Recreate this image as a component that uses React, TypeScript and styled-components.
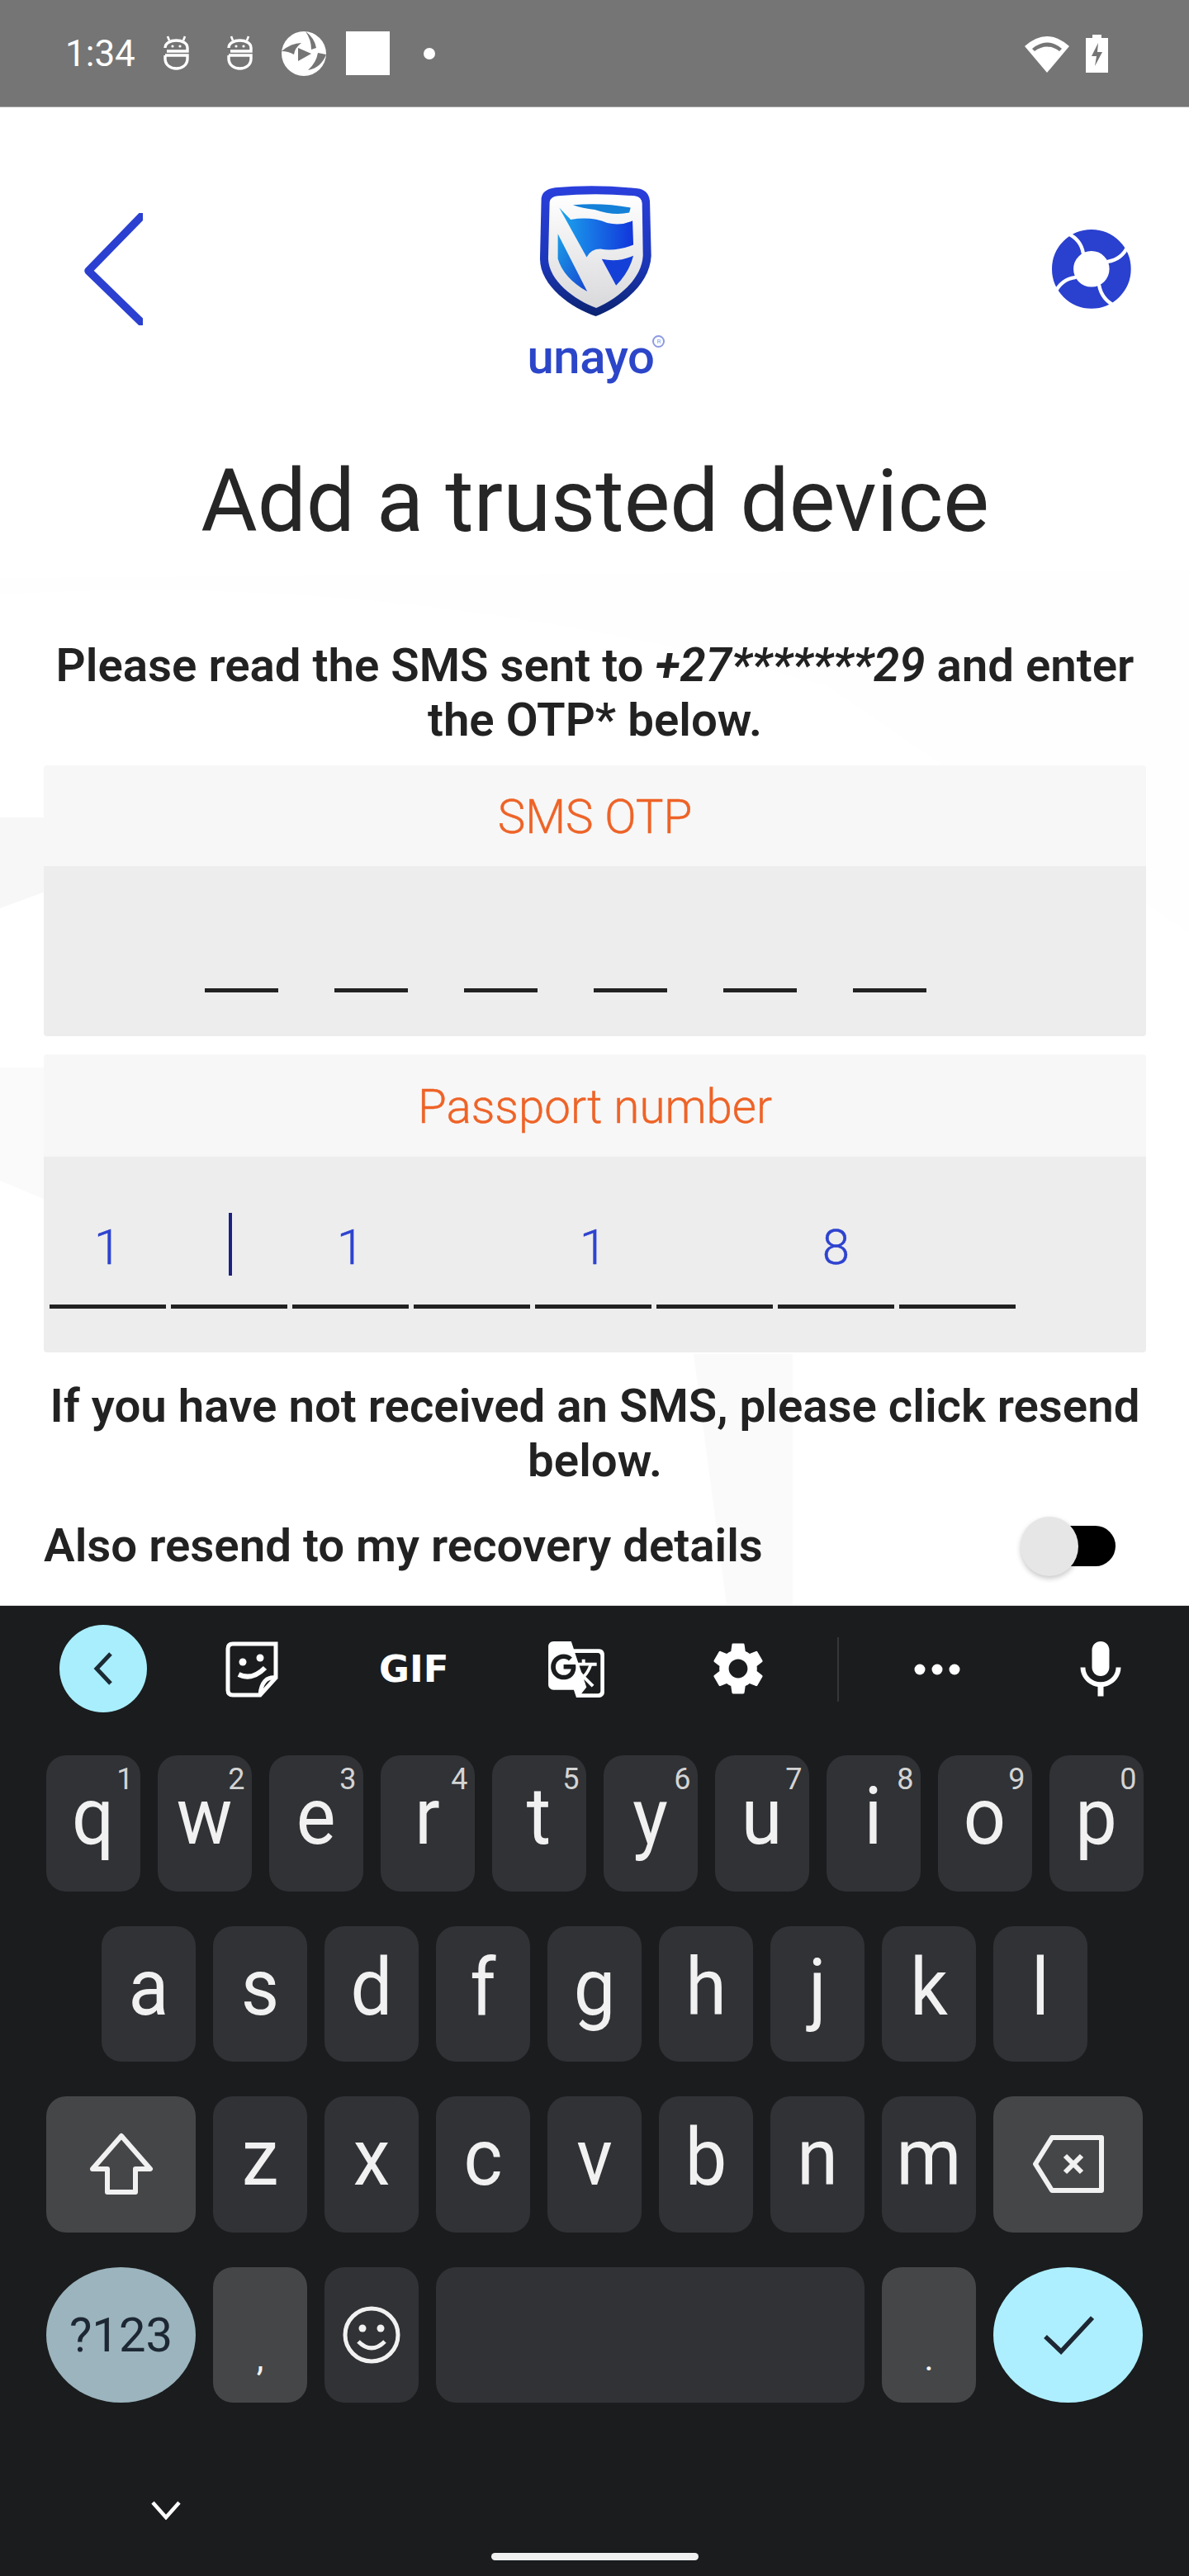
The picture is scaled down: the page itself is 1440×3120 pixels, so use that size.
import React from "react";
import styled, { createGlobalStyle } from "styled-components";
import { MdSettings, MdMic, MdGTranslate } from "react-icons/md";

const Global = createGlobalStyle`
  html, body { margin: 0; padding: 0; background: #fff; }
  #root { width: 1440px; height: 3120px; }
  * { box-sizing: border-box; }
`;

const Screen = styled.div`
  width: 1440px; height: 3120px; display: flex; flex-direction: column;
  font-family: Roboto, "Liberation Sans", sans-serif; overflow: hidden;
`;

/* Status bar */
const StatusBar = styled.header`
  height: 130px; flex: none; background: #757575; border-bottom: 1px solid #a8a8a8;
  display: flex; align-items: center; justify-content: space-between;
  padding: 0 98px 0 79px; color: #fff;
`;
const StatusGroup = styled.div`
  display: flex; align-items: center; gap: ${(p: { $gap: number }) => p.$gap}px;
`;
const Clock = styled.span`
  font-size: 44px; font-weight: 400; line-height: 44px; width: 86px; margin-right: 32px; white-space: nowrap;
`;
const Square = styled.div` width: 53px; height: 53px; background: #fff; margin-left: -2px; `;
const Dot = styled.div` width: 14px; height: 14px; border-radius: 50%; background: #fff; margin-left: 41px; `;
const SBot = styled.svg` width: 33px; height: 43px; margin-right: 44px; flex: none; `;
const SShutter = styled.svg` width: 54px; height: 54px; margin-left: -10px; margin-right: 26px; flex: none; `;

/* Main */
const Main = styled.main`
  position: relative; height: 1814px; flex: none; background: #fff; overflow: hidden;
`;
const Watermark = styled.svg`
  position: absolute; left: 0; top: 0; width: 1440px; height: 1814px;
`;
const Content = styled.div`
  position: relative; display: flex; flex-direction: column; padding: 0 52px 0 53px;
`;
const TopBar = styled.div`
  display: grid; grid-template-columns: 1fr auto 1fr; margin: 0 -52px 0 -53px; padding-top: 95px; height: 345px;
`;
const BackCell = styled.div` padding: 33px 0 0 101px; `;
const HelpCell = styled.div` display: flex; justify-content: flex-end; padding: 53px 70px 0 0; `;
const LogoCell = styled.div` display: flex; flex-direction: column; align-items: center; position: relative; `;
const Wordmark = styled.div`
  font-size: 58px; line-height: 60px; font-weight: 500; color: #2c46c9; margin-top: 19px; letter-spacing: -0.5px; position: relative; margin-left: -9px;
`;
const Registered = styled.span`
  position: absolute; right: -13px; top: 4px; width: 15px; height: 15px; border-radius: 50%;
  border: 2px solid #8d9be2; color: #8d9be2; font-size: 8px; line-height: 11px; text-align: center; font-weight: 400; letter-spacing: 0;
`;
const Title = styled.h1`
  margin: 73px 0 0; text-align: center; font-size: 105px; line-height: 120px; font-weight: 400; color: #262626; white-space: nowrap;
`;
const Body = styled.p`
  margin: ${(p: { $top: number }) => p.$top}px -20px 0; text-align: center; font-size: 56.4px; line-height: 66px;
  font-weight: 600; color: #222; white-space: nowrap;
`;
const Phone = styled.em` font-style: italic; `;
const Card = styled.section`
  margin-top: ${(p: { $top: number }) => p.$top}px; border-radius: 4px; overflow: hidden; display: flex; flex-direction: column;
`;
const CardHead = styled.div`
  height: ${(p: { $h: number }) => p.$h}px; background: #f7f7f7; color: #ee6327;
  display: flex; align-items: center; justify-content: center; padding-top: 3px;
  font-size: 56.5px; font-weight: 300; -webkit-text-stroke: 0.4px #ee6327;
`;
const OtpBody = styled.div`
  height: 206px; background: #ededed; display: flex; gap: 68px; padding: 148px 0 0 195px;
`;
const OtpDash = styled.div` width: 89px; height: 5px; background: #222; `;
const PassBody = styled.div`
  height: 237px; background: #ededed; position: relative; padding: 0 0 0 7px;
`;
const Cells = styled.div` display: flex; gap: 6px; `;
const Cell = styled.div`
  width: 141px; height: 184px; border-bottom: 5px solid #222; color: #2e43cf; font-size: 60px; font-weight: 300;
  -webkit-text-stroke: 0.4px #2e43cf;
  display: flex; align-items: center; justify-content: center; padding-top: 40px; line-height: 1;
`;
const Caret = styled.div`
  position: absolute; left: 224px; top: 68px; width: 4px; height: 76px; background: #1d2180;
`;
const ToggleRow = styled.div`
  display: flex; align-items: center; justify-content: space-between; margin-top: 32px; height: 76px; padding-right: 37px;
  font-size: 56.4px; font-weight: 600; color: #222;
`;
const Toggle = styled.div`
  position: relative; width: 90px; height: 49px; background: #000; border-radius: 25px; flex: none;
`;
const Thumb = styled.div`
  position: absolute; left: -25px; top: -11px; width: 70px; height: 72px; border-radius: 50%;
  background: #e6e6e6; box-shadow: 0 3px 6px rgba(0,0,0,.22);
`;

/* Keyboard */
const Keyboard = styled.section`
  flex: 1; background: #1a1c1e; border-top: 1px solid #d8d8d8; display: flex; flex-direction: column; position: relative;
`;
const Suggest = styled.div`
  height: 181px; position: relative; flex: none;
`;
const Tool = styled.div`
  position: absolute; left: ${(p: { $x: number; $y: number }) => p.$x}px; top: ${(p) => p.$y}px; color: #fff; display: flex;
`;
const BackPill = styled.div`
  position: absolute; left: 72px; top: 23px; width: 106px; height: 106px; border-radius: 50%; background: #a9eefd;
  display: flex; align-items: center; justify-content: center;
`;
const Gif = styled.span`
  font-family: "DejaVu Sans", sans-serif; font-size: 45px; font-weight: 700; line-height: 38px; color: #fff; letter-spacing: 0;
`;
const Divider = styled.div`
  position: absolute; left: 1014px; top: 38px; width: 2px; height: 78px; background: #35373a;
`;
const Rows = styled.div`
  display: flex; flex-direction: column; gap: 42px; padding: 0 55px;
`;
const Row = styled.div`
  display: flex; gap: 21px; height: 164.5px; justify-content: center;
`;
type KeyProps = { $w?: number; $tone?: "base" | "mod" | "num" | "go"; $round?: boolean };
const toneBg = { base: "#303235", mod: "#444648", num: "#9bb4bd", go: "#aeefff" };
const Key = styled.div<KeyProps>`
  position: relative; width: ${(p) => p.$w ?? 114}px; flex: none; height: 164.5px;
  border-radius: ${(p) => (p.$round ? "50% / 50%" : "24px")};
  background: ${(p) => toneBg[p.$tone ?? "base"]};
  color: #f1f1f1; display: flex; align-items: center; justify-content: center;
`;
const Letter = styled.span`
  display: block; font-size: 90px; font-weight: 400; line-height: 1; transform: scaleY(1.08); margin-bottom: 14px;
`;
const Hint = styled.sup`
  position: absolute; top: 12px; right: 8px; font-size: 36px; line-height: 34px; font-weight: 400; color: #d4d4d4;
`;
const NumLabel = styled.span` font-size: 58px; color: #1d2733; font-weight: 400; line-height: 1; `;
const Punct = styled.span` font-size: 44px; line-height: 44px; font-weight: 400; margin-top: 56px; `;
const HideChevron = styled.svg`
  position: absolute; left: 183px; top: 1083px; width: 36px; height: 24px;
`;
const HomeBar = styled.div`
  position: absolute; left: 595px; top: 1147px; width: 251px; height: 9px; border-radius: 5px; background: #f0f0f0;
`;

const Shield = () => (
  <svg width="137" height="158" viewBox="280 105 410 475" style={{ flex: "none" }}>
    <defs>
      <linearGradient id="rim" x1="0" y1="0" x2="0" y2="1">
        <stop offset="0" stopColor="#2a3fdc" /><stop offset=".6" stopColor="#1c37b8" /><stop offset="1" stopColor="#0b2370" />
      </linearGradient>
      <linearGradient id="inner" x1="0" y1="0" x2="0" y2="1">
        <stop offset="0" stopColor="#fff" /><stop offset="1" stopColor="#d9d9dc" />
      </linearGradient>
      <linearGradient id="flag" x1="0" y1="0" x2="1" y2="0">
        <stop offset="0" stopColor="#1ba6ec" /><stop offset="1" stopColor="#1235dc" />
      </linearGradient>
      <linearGradient id="low" x1="0" y1="0" x2="1" y2="1">
        <stop offset="0" stopColor="#1b9de8" /><stop offset="1" stopColor="#1645d0" />
      </linearGradient>
    </defs>
    <path d="M290 150 Q295 118 340 112 Q485 98 640 115 Q680 120 685 160 L690 360 C685 470 570 550 488 580 C400 550 285 470 285 370 Z" fill="url(#rim)" />
    <path d="M320 165 Q322 145 350 142 Q485 130 630 142 Q655 145 657 170 L660 360 C655 450 560 520 490 550 C410 520 317 450 315 370 Z" fill="url(#inner)" />
    <path d="M405 175 Q510 165 615 185 L610 203 Q550 215 485 192 Q440 188 405 175 Z" fill="#1480d8" />
    <path d="M355 185 L397 228 Q470 215 530 240 Q580 252 622 232 L625 320 Q560 345 505 335 Q470 335 455 365 Z" fill="url(#flag)" />
    <path d="M350 280 L457 490 Q370 440 350 370 Z" fill="url(#low)" />
    <path d="M510 372 Q570 385 625 360 Q610 420 562 468 Z" fill="#1540d8" />
  </svg>
);

const Lifebuoy = () => (
  <svg width="96" height="96" viewBox="160 113 287 287">
    <circle cx="303" cy="256" r="104" fill="none" stroke="#2a40cf" strokeWidth="78" />
    <g fill="none" stroke="#fff" strokeWidth="13" strokeLinecap="round">
      <path d="M218 128 Q265 150 273 198" />
      <path d="M436 172 Q412 222 362 229" />
      <path d="M388 390 Q340 365 331 316" />
      <path d="M172 340 Q195 294 243 287" />
    </g>
  </svg>
);

const BotIcon = () => (
  <SBot viewBox="0 0 33 43" fill="none" stroke="#fff" strokeWidth="3.4">
    <path d="M6 1l2 5M27 1l-2 5" strokeWidth="2.6" />
    <path d="M3 15C3 3 30 3 30 15v4H5" />
    <path d="M3 24H30v4c0 16-27 16-27 0v-4" />
    <circle cx="12" cy="13" r="1.6" fill="#fff" stroke="none" />
    <circle cx="21" cy="13" r="1.6" fill="#fff" stroke="none" />
  </SBot>
);

const keys1: [string, string][] = [["q","1"],["w","2"],["e","3"],["r","4"],["t","5"],["y","6"],["u","7"],["i","8"],["o","9"],["p","0"]];
const keys2 = ["a","s","d","f","g","h","j","k","l"];
const keys3 = ["z","x","c","v","b","n","m"];
const passport = ["1", "", "1", "", "1", "", "8", ""];

export default function App() {
  return (
    <Screen>
      <Global />
      <StatusBar>
        <StatusGroup $gap={0}>
          <Clock>1:34</Clock>
          <BotIcon />
          <BotIcon />
          <SShutter viewBox="0 0 54 54">
            <circle cx="27" cy="27" r="27" fill="#fff" />
            <path d="M0 24Q12 14 24 14Q16 20 15 28Q8 24 0 24Z M29 0Q40 8 42 20L36 22Q36 10 29 0Z M54 28Q48 44 32 47Q42 38 44 26Z" fill="#757575" />
            <path d="M20 20L36 27L20 36Z" fill="#757575" />
          </SShutter>
          <Square />
          <Dot />
        </StatusGroup>
        <StatusGroup $gap={20}>
          <svg width="54" height="46" viewBox="0 0 54 46" fill="#fff">
            <path d="M0 14Q27-10 54 14L27 46Z" />
            <path d="M9 17Q27 2 45 17L42 20Q27 9 12 20Z" fill="#757575" />
          </svg>
          <svg width="27" height="46" viewBox="0 0 27 46" fill="#fff">
            <path d="M8 0h11v4h8v42H0V4h8Z" />
            <path d="M15 10L7 26h6l-2 12 9-17h-6Z" fill="#757575" />
          </svg>
        </StatusGroup>
      </StatusBar>

      <Main>
        <Watermark viewBox="0 0 1440 1814">
          <path d="M0 570L1440 560V1000L1000 700Q500 560 0 590Z" fill="#fefefe" />
          <path d="M0 860H55V950L0 970Z" fill="#f7f7f7" />
          <path d="M0 1163H55V1323L0 1300Z" fill="#fafafa" />
          <path d="M840 1510H960V1814H880Z" fill="#fafafa" />
        </Watermark>
        <Content>
          <TopBar>
            <BackCell>
              <svg width="72" height="136" viewBox="0 0 72 136" fill="none" stroke="#2b40d0" strokeWidth="9.5" strokeLinejoin="round">
                <path d="M76 -2L6 70L76 138" />
              </svg>
            </BackCell>
            <LogoCell>
              <Shield />
              <Wordmark>unayo<Registered>R</Registered></Wordmark>
            </LogoCell>
            <HelpCell>
              <Lifebuoy />
            </HelpCell>
          </TopBar>
          <Title>Add a trusted device</Title>
          <Body $top={105}>Please read the SMS sent to <Phone>+27*******29</Phone> and enter<br />the OTP* below.</Body>
          <Card $top={22}>
            <CardHead $h={122}>SMS OTP</CardHead>
            <OtpBody>{[0,1,2,3,4,5].map((i) => <OtpDash key={i} />)}</OtpBody>
          </Card>
          <Card $top={22}>
            <CardHead $h={124}>Passport number</CardHead>
            <PassBody>
              <Cells>{passport.map((d, i) => <Cell key={i}>{d}</Cell>)}</Cells>
              <Caret />
            </PassBody>
          </Card>
          <Body $top={32}>If you have not received an SMS, please click resend<br />below.</Body>
          <ToggleRow>
            <span>Also resend to my recovery details</span>
            <Toggle><Thumb /></Toggle>
          </ToggleRow>
        </Content>
      </Main>

      <Keyboard>
        <Suggest>
          <BackPill>
            <svg width="26" height="42" viewBox="0 0 26 42" fill="none" stroke="#1c2a33" strokeWidth="5"><path d="M22 3L5 21L22 39" /></svg>
          </BackPill>
          <Tool $x={273} $y={43}>
            <svg width="64" height="68" viewBox="0 0 64 68" fill="none" stroke="#fff" strokeWidth="5">
              <path d="M3 9Q3 3 9 3H61V44L42 65H9Q3 65 3 59Z" />
              <path d="M61 44Q44 42 42 65" />
              <circle cx="21" cy="25" r="4.5" fill="#fff" stroke="none" />
              <circle cx="42" cy="20" r="4.5" fill="#fff" stroke="none" />
              <path d="M16 40Q32 48 48 32" strokeWidth="6" />
            </svg>
          </Tool>
          <Tool $x={459} $y={58}><Gif>GIF</Gif></Tool>
          <Tool $x={661} $y={40}><MdGTranslate size={74} /></Tool>
          <Tool $x={856} $y={38}><MdSettings size={76} /></Tool>
          <Divider />
          <Tool $x={1107} $y={70}>
            <svg width="56" height="14" viewBox="0 0 56 14" fill="#fff"><circle cx="7" cy="7" r="6.5" /><circle cx="28" cy="7" r="6.5" /><circle cx="49" cy="7" r="6.5" /></svg>
          </Tool>
          <Tool $x={1291} $y={36}><MdMic size={84} /></Tool>
        </Suggest>
        <Rows>
          <Row>{keys1.map(([k, n]) => <Key key={k}><Letter>{k}</Letter><Hint>{n}</Hint></Key>)}</Row>
          <Row>{keys2.map((k) => <Key key={k}><Letter>{k}</Letter></Key>)}</Row>
          <Row>
            <Key $w={181} $tone="mod">
              <svg width="78" height="76" viewBox="0 0 78 76" fill="none" stroke="#f1f1f1" strokeWidth="6" strokeLinejoin="round"><path d="M39 4L74 44H56V72H22V44H4Z" /></svg>
            </Key>
            {keys3.map((k) => <Key key={k}><Letter>{k}</Letter></Key>)}
            <Key $w={181} $tone="mod">
              <svg width="88" height="72" viewBox="0 0 88 72" fill="none" stroke="#f1f1f1" strokeWidth="6" strokeLinejoin="round">
                <path d="M24 4H84V68H24L4 36Z" /><path d="M40 26L60 46M60 26L40 46" />
              </svg>
            </Key>
          </Row>
          <Row>
            <Key $w={181} $tone="num" $round><NumLabel>?123</NumLabel></Key>
            <Key $tone="mod"><Punct>,</Punct></Key>
            <Key>
              <svg width="70" height="72" viewBox="0 0 70 72" fill="none" stroke="#f1f1f1" strokeWidth="5">
                <circle cx="35" cy="36" r="32" />
                <circle cx="24" cy="28" r="4.5" fill="#f1f1f1" stroke="none" /><circle cx="46" cy="28" r="4.5" fill="#f1f1f1" stroke="none" />
                <path d="M19 44Q35 60 51 44" />
              </svg>
            </Key>
            <Key $w={519} />
            <Key $tone="mod"><Punct>.</Punct></Key>
            <Key $w={181} $tone="go" $round>
              <svg width="62" height="48" viewBox="0 0 62 48" fill="none" stroke="#1d2733" strokeWidth="5.5"><path d="M3 26L22 44L60 3" /></svg>
            </Key>
          </Row>
        </Rows>
        <HideChevron viewBox="0 0 36 24" fill="none" stroke="#fff" strokeWidth="4.5"><path d="M2 3L18 21L34 3" /></HideChevron>
        <HomeBar />
      </Keyboard>
    </Screen>
  );
}
